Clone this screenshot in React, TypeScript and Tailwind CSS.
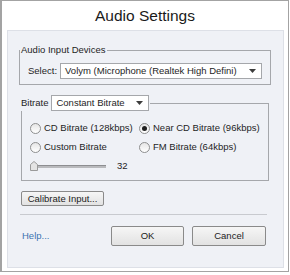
import React from 'react';

const font = { fontFamily: '"Liberation Sans", Arial, sans-serif' };

function Radio({ label, checked }: { label: string; checked?: boolean }) {
  return (
    <label className="flex items-center gap-[3px] h-[14px] whitespace-nowrap">
      <span className="w-[11px] h-[11px] rounded-full border border-[#8e8f8f] bg-gradient-to-b from-[#e6e6e6] to-[#ffffff] flex items-center justify-center shrink-0">
        {checked && <span className="w-[5px] h-[5px] rounded-full bg-[#1f1f1f]" />}
      </span>
      <span>{label}</span>
    </label>
  );
}

function Arrow() {
  return (
    <svg width="7" height="4" viewBox="0 0 7 4" className="shrink-0">
      <path d="M0 0h7L3.5 4z" fill="#3c3c3c" />
    </svg>
  );
}

function Button({ children, className = '' }: { children: React.ReactNode; className?: string }) {
  return (
    <button
      className={`border border-[#8a8a8a] rounded-[2px] bg-gradient-to-b from-[#f6f6f6] to-[#e2e2e2] text-[#1c1c1c] whitespace-nowrap ${className}`}
    >
      {children}
    </button>
  );
}

export default function App() {
  return (
    <div
      style={font}
      className="w-[289px] h-[272px] bg-white border border-l-2 border-[#a3a3a3] text-[9.5px] text-[#1e1e1e] flex flex-col whitespace-nowrap"
    >
      <h1 className="text-center text-[15.5px] leading-[20px] text-[#1a1a1a] mt-[5px] h-[24px]">Audio Settings</h1>
      <div className="ml-[5px] w-[277px] h-[238px] bg-[#eff1f6] border border-[#dde0e7] flex flex-col px-[11px] pt-[13px]">
        {/* input devices */}
        <fieldset className="border border-[#a5a7ab] w-[248px] px-[8px] pt-[7px] pb-[5px] flex items-center gap-[3px]">
          <legend className="px-[1px] -ml-[8px] leading-[12px] text-[#1e1e1e]">Audio Input Devices</legend>
          <span>Select:</span>
          <div className="w-[202px] h-[16px] bg-white border border-[#a5a7ab] flex items-center justify-between pl-[4px] pr-[5px]">
            <span className="leading-[14px]">Volym (Microphone (Realtek High Defini)</span>
            <Arrow />
          </div>
        </fieldset>

        {/* bitrate */}
        <fieldset className="border border-[#a5a7ab] w-[246px] ml-[2px] mt-[10px] px-[8px] pt-[10px] pb-[7px] flex flex-col">
          <legend className="-ml-[9px] pr-[1px] flex items-center gap-[3px]">
            <span>Bitrate</span>
            <div className="w-[98px] h-[16px] bg-white border border-[#a5a7ab] flex items-center justify-between pl-[4px] pr-[5px]">
              <span className="leading-[14px]">Constant Bitrate</span>
              <Arrow />
            </div>
          </legend>
          <div className="grid grid-cols-[109px_1fr] gap-y-[5px]">
            <Radio label="CD Bitrate (128kbps)" />
            <Radio label="Near CD Bitrate (96kbps)" checked />
            <Radio label="Custom Bitrate" />
            <Radio label="FM Bitrate (64kbps)" />
          </div>
          <div className="flex items-center mt-[5px] h-[14px]">
            <div className="relative w-[76px] h-[12px] flex items-center">
              <div className="w-full h-[3px] bg-[#b9babd] border-t border-[#8d8e91] ml-[2px]" />
              <svg width="8" height="10" viewBox="0 0 8 10" className="absolute left-0 top-[1px]">
                <path d="M0.5 9.5V3.5L4 0.5L7.5 3.5V9.5Z" fill="#e4e4e4" stroke="#9a9a9a" />
              </svg>
            </div>
            <span className="ml-[11px]">32</span>
          </div>
        </fieldset>

        <Button className="w-[83px] h-[15px] ml-[2px] mt-[10px] text-[9.5px] leading-[13px]">Calibrate Input...</Button>
        <div className="h-px w-[247px] ml-[1px] bg-[#c8cacf] mt-[8px]" />
        <div className="flex items-center mt-[11px] pl-[3px]">
          <a className="text-[#3b73b0] w-[89px]">Help...</a>
          <Button className="w-[73px] h-[20px] text-[9.5px]">OK</Button>
          <Button className="w-[74px] h-[20px] ml-[8px] text-[9.5px]">Cancel</Button>
        </div>
      </div>
    </div>
  );
}
